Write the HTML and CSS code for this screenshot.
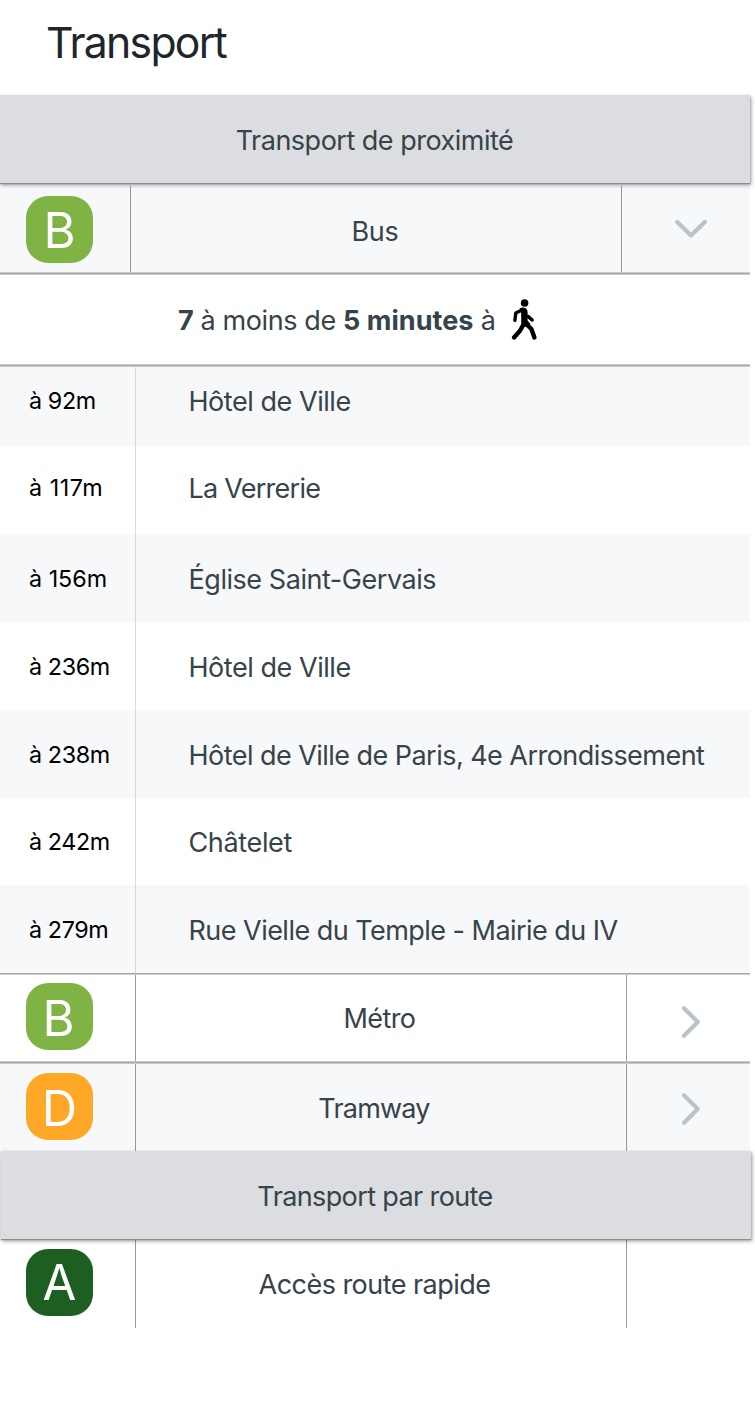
FILE: index.html
```html
<!DOCTYPE html>
<html lang="fr">
<head>
<meta charset="utf-8">
<title>Transport</title>
<link rel="stylesheet" href="styles.css">
</head>
<body>
<main class="page">
  <h1 class="title">Transport</h1>
  <h2 class="section"><span class="t-near">Transport de proximité</span></h2>
  <div class="mode mode-open shade">
    <div class="cell"><span class="badge green">B</span></div>
    <div class="cell name"><span class="t-bus">Bus</span></div>
    <div class="cell arrow"><svg class="chev down" viewBox="0 0 36 36"><path d="M4.2 11 18 24.6 31.8 11"/></svg></div>
  </div>
  <div class="rule"></div>
  <div class="summary">
    <p class="t-summary"><b>7</b> à moins de <b class="minutes">5 minutes</b> à</p>
    <svg class="walker" viewBox="0 0 28 42"><circle cx="14.6" cy="4" r="3.8"/><path d="M9.6 9.2Q13 7.6 15.6 9.2 17.6 10.4 17.6 13V21.6L20.4 25 15 28 11.2 24.4V14Z"/><path class="limb" d="M12.5 10.8 5.8 14 4.9 21.4M18 17.4 22.2 21"/><path class="leg" d="M13 26.4 9.8 32 4 38.4M15 23.6 21.4 30 24.4 38.4"/></svg>
  </div>
  <div class="rule"></div>
  <ul class="stops">
    <li class="stop shade first"><span class="dist">à 92m</span><span class="place t1">Hôtel de Ville</span></li>
    <li class="stop second"><span class="dist wide">à 117m</span><span class="place t2">La Verrerie</span></li>
    <li class="stop shade"><span class="dist mid">à 156m</span><span class="place t3">Église Saint-Gervais</span></li>
    <li class="stop"><span class="dist">à 236m</span><span class="place t1">Hôtel de Ville</span></li>
    <li class="stop shade"><span class="dist">à 238m</span><span class="place t5">Hôtel de Ville de Paris, 4e Arrondissement</span></li>
    <li class="stop short"><span class="dist">à 242m</span><span class="place t6">Châtelet</span></li>
    <li class="stop shade"><span class="dist">à 279m</span><span class="place t7">Rue Vielle du Temple - Mairie du IV</span></li>
  </ul>
  <div class="rule thin"></div>
  <div class="mode metro">
    <div class="cell"><span class="badge green">B</span></div>
    <div class="cell name"><span class="t-metro">Métro</span></div>
    <div class="cell arrow"><svg class="chev" viewBox="0 0 36 36"><path d="M11 4.2 24.8 18 11 31.8"/></svg></div>
  </div>
  <div class="rule"></div>
  <div class="mode tram shade">
    <div class="cell"><span class="badge orange">D</span></div>
    <div class="cell name"><span class="t-tram">Tramway</span></div>
    <div class="cell arrow"><svg class="chev" viewBox="0 0 36 36"><path d="M11 4.2 24.8 18 11 31.8"/></svg></div>
  </div>
  <h2 class="section road"><span class="t-road">Transport par route</span></h2>
  <div class="mode access">
    <div class="cell"><span class="badge dark">A</span></div>
    <div class="cell name"><span class="t-access">Accès route rapide</span></div>
    <div class="cell arrow"></div>
  </div>
</main>
</body>
</html>
```
FILE: styles.css
```css
* { box-sizing: border-box; }
body {
  margin: 0;
  background: #fff;
  color: #36434b;
  font: 27px/32px Inter, "Liberation Sans", sans-serif;
}
.page { width: 751px; height: 1413px; }
.title {
  margin: 0;
  height: 95px;
  padding: 16px 0 0 46px;
  font-size: 42.7px;
  line-height: 54px;
  font-weight: 400;
  letter-spacing: -1.7px;
  color: #1c262b;
}
.section {
  position: relative;
  display: flex;
  justify-content: center;
  align-items: center;
  width: 750px;
  height: 88px;
  margin: 0;
  padding: 3px 1px 0 0;
  background: #dcdde1;
  box-shadow: 0 1px 1px #8b8d8d, 1px 2px 4px rgba(0, 0, 0, 0.4);
  font-size: 27px;
  font-weight: 400;
}
.road { margin-left: 1px; padding-right: 2px; }
.shade { background: linear-gradient(#f6f8fa, #f6f8fa) left / 750px 100% no-repeat; }
.mode {
  display: grid;
  grid-template-columns: 136px 491px 1fr;
  height: 87px;
}
.mode-open { grid-template-columns: 131px 491px 1fr; height: 89px; padding-top: 3px; }
.metro { height: 86px; }
.access { height: 89px; }
.cell { display: flex; align-items: center; }
.cell:not(.arrow) { border-right: 1px solid #97999a; }
.name { justify-content: center; }
.badge {
  width: 67px;
  height: 67px;
  margin-left: 26px;
  border-radius: 22px;
  color: #fff;
  font-size: 49px;
  line-height: 68px;
  font-weight: 400;
  text-align: center;
}
.mode-open .badge { margin-top: 1px; line-height: 70px; }
.metro .badge { margin-bottom: 3px; line-height: 71px; text-indent: -2px; }
.tram .badge { margin-bottom: 2px; line-height: 71px; }
.access .badge { margin-bottom: 2px; }
.green { background: #7fb344; }
.orange { background: #ffa828; }
.dark { background: #1c5f20; }
.mode-open .name { padding: 6px 2px 0 0; }
.metro .name { padding: 2px 3px 0 0; }
.tram .name { padding: 3px 14px 0 0; }
.access .name { padding: 3px 13px 0 0; }
.chev {
  width: 36px;
  height: 36px;
  margin-left: 46px;
  fill: none;
  stroke: #b7c4cc;
  stroke-width: 4.2;
  stroke-linecap: round;
  stroke-linejoin: round;
}
.down { margin-left: 51px; }
.metro .chev { margin-top: 8px; }
.tram .chev { margin-top: 3px; }
.rule { height: 3px; width: 750px; background: linear-gradient(#cacaca 1px, #a8a9a9 1px 2px, #cacaca 2px); }
.thin { height: 2px; background: linear-gradient(#a8a9a9 1px, #cacaca 1px); }
.summary {
  display: flex;
  align-items: center;
  height: 89px;
  padding-left: 178px;
}
.summary p { margin: 0; padding-top: 3px; width: 332px; white-space: nowrap; letter-spacing: -0.39px; }
.summary b { font-weight: 700; }
.summary .minutes { letter-spacing: 0.05px; }
.walker {
  width: 28px;
  height: 42px;
  fill: #000;
  stroke: #000;
  stroke-width: 0;
  stroke-linecap: round;
  stroke-linejoin: round;
}
.limb { fill: none; stroke-width: 3.4; }
.leg { fill: none; stroke-width: 4.4; }
.stops { margin: 0; padding: 0; list-style: none; }
.stop { display: flex; height: 88px; }
.stop.short { height: 87px; }
.stop.first { height: 79px; }
.dist {
  display: flex;
  align-items: center;
  width: 136px;
  padding: 2px 0 0 29px;
  border-right: 1px solid #d6dadb;
  color: #000;
  font-size: 23.3px;
  letter-spacing: -0.4px;
}
.wide { letter-spacing: 0.55px; }
.mid { letter-spacing: 0; }
.short .dist { padding-top: 0; }
.place { display: flex; align-items: center; padding: 4px 0 0 52.5px; white-space: nowrap; }
.short .place { padding-top: 2px; }
.first .dist { padding-bottom: 11px; padding-top: 0; }
.first .place { padding-bottom: 9px; padding-top: 0; }
.second .dist { padding-bottom: 4px; padding-top: 0; }
.second .place { padding-bottom: 2px; padding-top: 0; }
.t-near { letter-spacing: -0.5px; }
.t-bus { letter-spacing: -0.3px; }
.t1 { letter-spacing: -0.45px; }
.t2 { letter-spacing: -0.75px; }
.t3 { letter-spacing: -0.45px; }
.t5 { letter-spacing: -0.54px; }
.t6 { letter-spacing: -0.35px; }
.t7 { letter-spacing: -0.53px; }
.t-metro { letter-spacing: -0.6px; }
.t-tram { letter-spacing: -0.8px; }
.t-road { letter-spacing: -0.62px; }
.t-access { letter-spacing: -0.54px; }
```
